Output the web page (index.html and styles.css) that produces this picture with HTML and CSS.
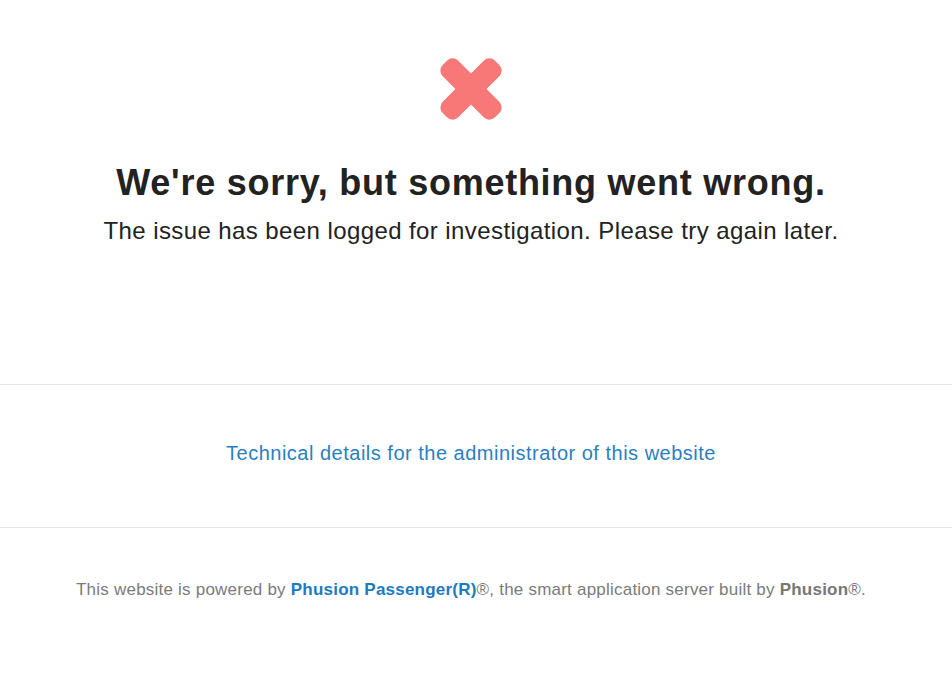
FILE: index.html
```html
<!DOCTYPE html>
<html lang="en">
<head>
  <meta charset="UTF-8" />
  <title>We're sorry, but something went wrong</title>
  <link rel="stylesheet" href="styles.css">
</head>
<body>
  <section class="error">
    <svg class="error-icon" width="66" height="66" viewBox="0 0 66 66" aria-hidden="true">
      <g transform="translate(33 33)" fill="#f87878">
        <rect x="-37" y="-11" width="74" height="22" rx="8" transform="rotate(45)" />
        <rect x="-37" y="-11" width="74" height="22" rx="8" transform="rotate(-45)" />
      </g>
    </svg>
    <h1>We're sorry, but something went wrong.</h1>
    <p>The issue has been logged for investigation. Please try again later.</p>
  </section>

  <section class="details">
    <a href="#">Technical details for the administrator of this website</a>
  </section>

  <footer>
    This website is powered by <a href="#" class="passenger">Phusion Passenger(R)</a>&reg;, the smart application server built by <b>Phusion</b>&reg;.
  </footer>
</body>
</html>
```

FILE: styles.css
```css
body {
  font-family: "Liberation Sans", Arial, sans-serif;
  margin: 0;
  padding: 0;
  background: #fff;
  color: #222;
}
.error {
  text-align: center;
  padding: 56px 10px 0 0;
  height: 385px;
  box-sizing: border-box;
  border-bottom: 1px solid #e5e5e5;
}
.error-icon {
  display: block;
  margin: 0 auto;
}
.error h1 {
  font-size: 36px;
  line-height: 43px;
  letter-spacing: 0.74px;
  margin: 39px 0 0;
}
.error p {
  font-size: 24px;
  line-height: 29px;
  letter-spacing: 0.41px;
  margin: 12px 0 0;
}
.details {
  text-align: center;
  height: 143px;
  box-sizing: border-box;
  padding: 56px 10px 0 0;
  border-bottom: 1px solid #e5e5e5;
}
.details a {
  font-size: 20px;
  line-height: 24px;
  letter-spacing: 0.5px;
  color: #2a7fc2;
  text-decoration: none;
}
footer {
  text-align: center;
  font-size: 17px;
  line-height: 22px;
  letter-spacing: 0.22px;
  padding: 51px 10px 0 0;
  color: #7b7b7b;
}
footer a.passenger {
  color: #1c7bbf;
  font-weight: bold;
  text-decoration: none;
}
footer b {
  color: #777;
}
```
